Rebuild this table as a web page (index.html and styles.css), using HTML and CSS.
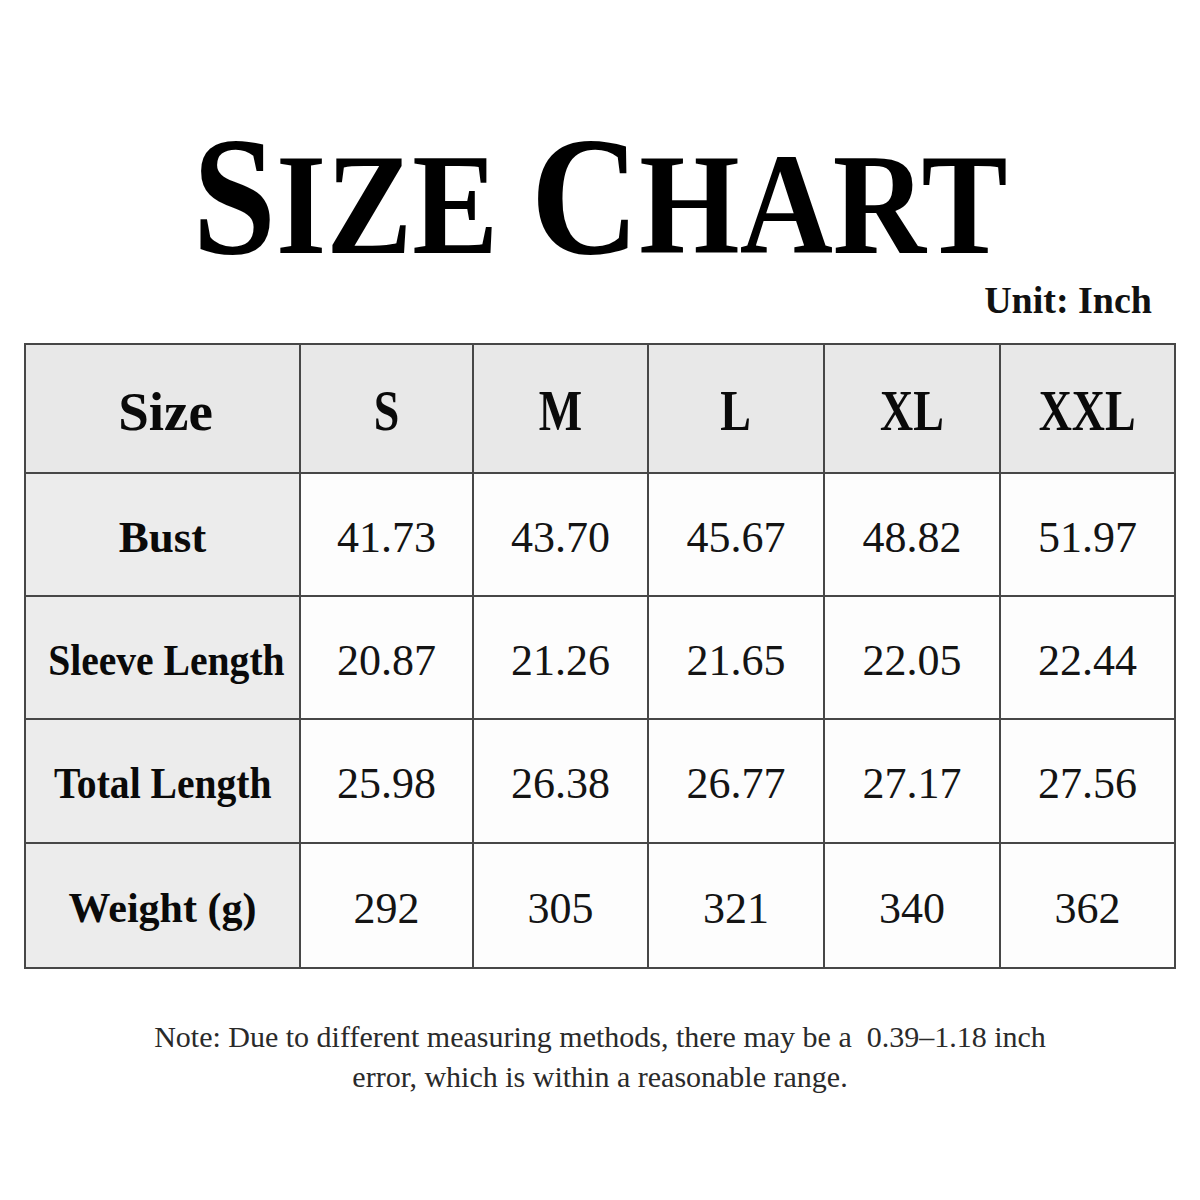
FILE: index.html
```html
<!DOCTYPE html>
<html lang="en">
<head>
<meta charset="utf-8">
<title>Size Chart</title>
<link rel="stylesheet" href="styles.css">
</head>
<body>
<div class="page">
  <h1 class="title"><span class="title-inner"><span class="cap">S</span><span class="sc">IZE </span><span class="cap">C</span><span class="sc">HART</span></span></h1>
  <div class="unit">Unit: Inch</div>
  <table class="chart">
    <colgroup>
      <col class="c-label">
      <col class="c-s">
      <col class="c-m">
      <col class="c-l">
      <col class="c-xl">
      <col class="c-xxl">
    </colgroup>
    <thead>
      <tr class="r-head">
        <th class="label"><span class="hd wide">Size</span></th>
        <th><span class="hd">S</span></th>
        <th><span class="hd">M</span></th>
        <th><span class="hd">L</span></th>
        <th><span class="hd">XL</span></th>
        <th><span class="hd">XXL</span></th>
      </tr>
    </thead>
    <tbody>
      <tr class="r-bust">
        <th class="label"><span class="lb">Bust</span></th>
        <td>41.73</td><td>43.70</td><td>45.67</td><td>48.82</td><td>51.97</td>
      </tr>
      <tr class="r-sleeve">
        <th class="label"><span class="lb narrow shift">Sleeve Length</span></th>
        <td>20.87</td><td>21.26</td><td>21.65</td><td>22.05</td><td>22.44</td>
      </tr>
      <tr class="r-total">
        <th class="label"><span class="lb narrow">Total Length</span></th>
        <td>25.98</td><td>26.38</td><td>26.77</td><td>27.17</td><td>27.56</td>
      </tr>
      <tr class="r-weight">
        <th class="label"><span class="lb weight">Weight (g)</span></th>
        <td>292</td><td>305</td><td>321</td><td>340</td><td>362</td>
      </tr>
    </tbody>
  </table>
  <p class="note">Note: Due to different measuring methods, there may be a&nbsp; 0.39–1.18 inch<br>error, which is within a reasonable range.</p>
</div>
</body>
</html>
```

FILE: styles.css
```css
html, body {
  margin: 0;
  padding: 0;
  background: #ffffff;
}

body {
  font-family: "Liberation Serif", "Times New Roman", serif;
  color: #111111;
}

.page {
  width: 1200px;
  box-sizing: border-box;
  padding: 0 24px;
}

.title {
  margin: 0;
  padding-top: 112px;
  height: 169px;
  font-size: 169px;
  line-height: 169px;
  font-weight: 700;
  text-align: center;
  color: #000000;
  white-space: nowrap;
}

.title-inner {
  display: inline-block;
  transform: scaleX(0.89);
  transform-origin: center;
}

.title .cap {
  font-size: 169px;
}

.title .sc {
  font-size: 145px;
}

.unit {
  margin-top: 0;
  height: 38px;
  font-size: 38px;
  line-height: 38px;
  font-weight: 700;
  text-align: right;
  padding-right: 24px;
  color: #111111;
}

.chart {
  margin-top: 24px;
  width: 1152px;
  table-layout: fixed;
  border-collapse: collapse;
  border: 2px solid #474747;
}

.c-label { width: 275px; }
.c-s { width: 173px; }
.c-m { width: 175px; }
.c-l { width: 176px; }
.c-xl { width: 176px; }
.c-xxl { width: 175px; }

.chart th,
.chart td {
  border: 2px solid #474747;
  padding: 5px 0 0 0;
  text-align: center;
  vertical-align: middle;
  white-space: nowrap;
}

.chart td {
  background: #fdfdfd;
  font-size: 44px;
  font-weight: 400;
  color: #141414;
}

.chart thead th {
  background: #e8e8e8;
}

.chart th.label {
  background: #ececec;
}

.chart thead th.label {
  background: #e8e8e8;
}

.r-head { height: 129px; }
.r-bust { height: 123px; }
.r-sleeve { height: 123px; }
.r-total { height: 124px; }
.r-weight { height: 125px; }

.hd {
  display: inline-block;
  font-size: 56px;
  font-weight: 700;
  color: #0a0a0a;
  transform: scaleX(0.82);
}

.hd.wide {
  font-size: 55px;
  transform: none;
  margin-left: 6px;
}

.lb {
  display: inline-block;
  font-size: 45px;
  font-weight: 700;
  color: #0a0a0a;
}

.lb.narrow {
  font-size: 44px;
  transform: scaleX(0.9);
}

.lb.shift {
  margin-left: 8px;
}

.lb.weight {
  font-size: 42px;
}

.note {
  margin: 48px 0 0 0;
  text-align: center;
  font-size: 30px;
  line-height: 40px;
  color: #2a2a2a;
}
```
